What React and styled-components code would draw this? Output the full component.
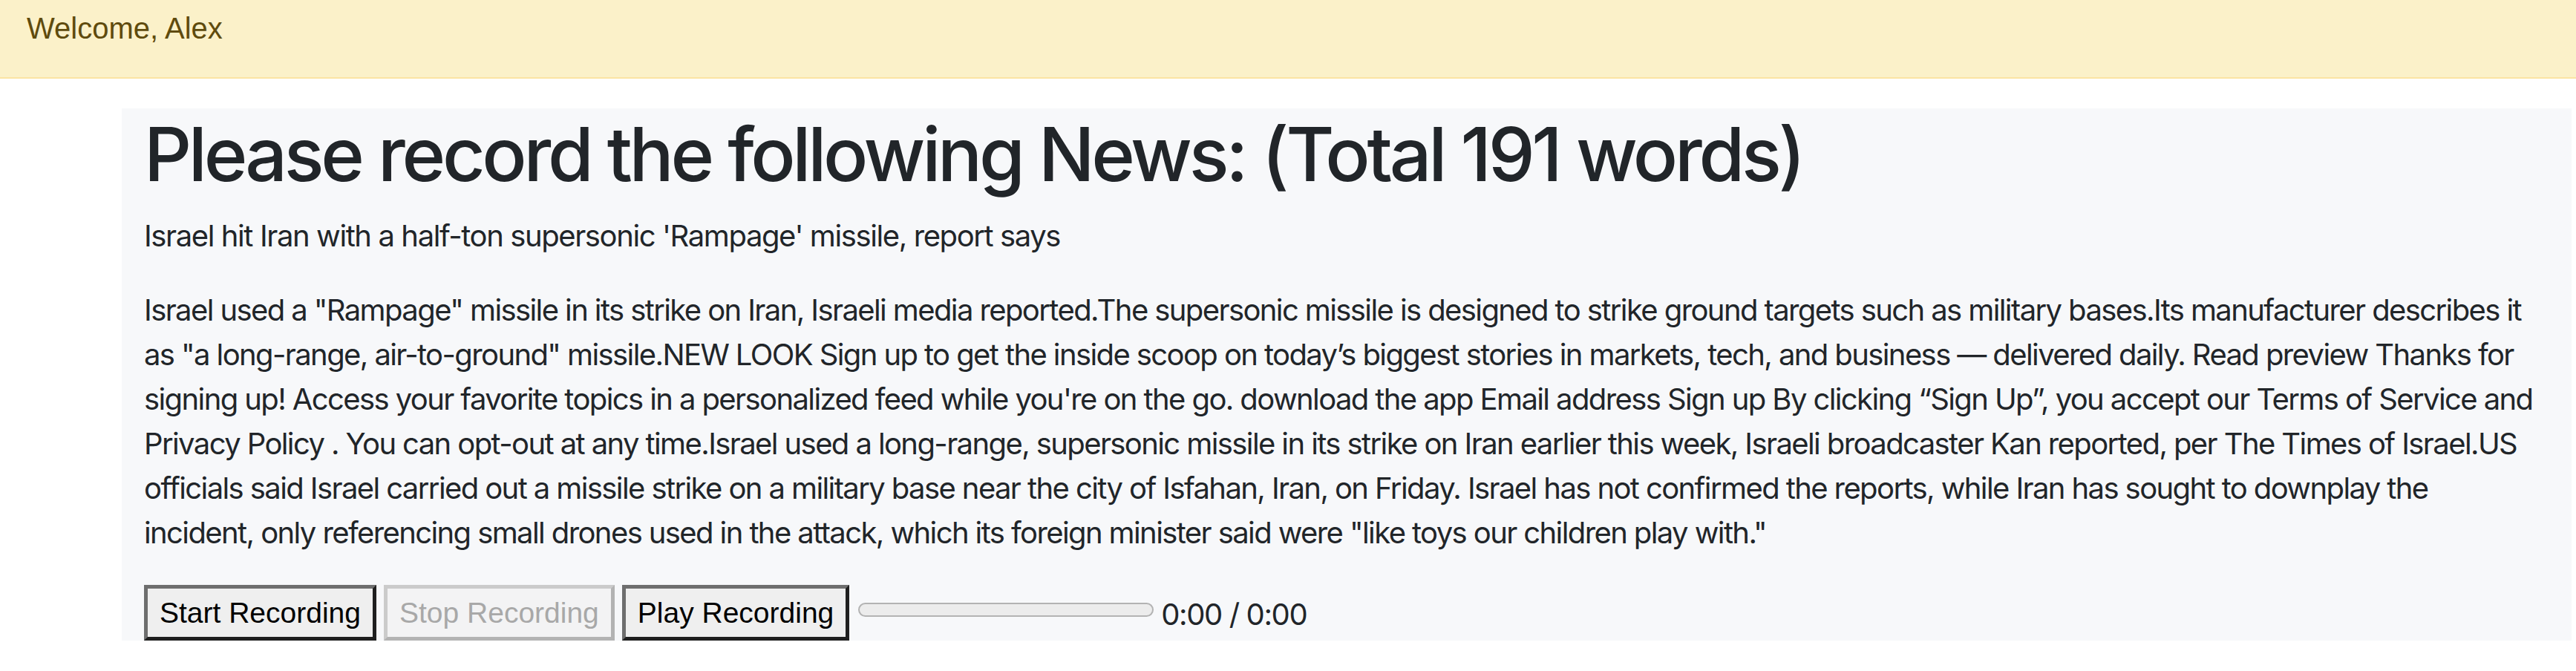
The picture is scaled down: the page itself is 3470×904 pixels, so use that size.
import React from 'react';
import styled, { createGlobalStyle } from 'styled-components';

const GlobalStyle = createGlobalStyle`
  body {
    margin: 0;
    background: #ffffff;
    font-family: Inter, "Noto Sans", sans-serif;
    color: #212529;
  }
`;

const news = {
  words: 191,
  title: "Israel hit Iran with a half-ton supersonic 'Rampage' missile, report says",
  body:
    'Israel used a "Rampage" missile in its strike on Iran, Israeli media reported.The supersonic missile is designed to strike ground targets such as military bases.Its manufacturer describes it as "a long-range, air-to-ground" missile.NEW LOOK Sign up to get the inside scoop on today\u2019s biggest stories in markets, tech, and business \u2014 delivered daily. Read preview Thanks for signing up! Access your favorite topics in a personalized feed while you\'re on the go. download the app Email address Sign up By clicking \u201cSign Up\u201d, you accept our Terms of Service and Privacy Policy . You can opt-out at any time.Israel used a long-range, supersonic missile in its strike on Iran earlier this week, Israeli broadcaster Kan reported, per The Times of Israel.US officials said Israel carried out a missile strike on a military base near the city of Isfahan, Iran, on Friday. Israel has not confirmed the reports, while Iran has sought to downplay the incident, only referencing small drones used in the attack, which its foreign minister said were "like toys our children play with."',
};

const App = () => (
  <>
    <GlobalStyle />
    <Header>Welcome, Alex</Header>
    <Panel>
      <Title>Please record the following News: (Total {news.words} words)</Title>
      <Paragraph>{news.title}</Paragraph>
      <Paragraph $tight>{news.body}</Paragraph>
      <Controls>
        <RecordButton>Start Recording</RecordButton>
        <RecordButton disabled>Stop Recording</RecordButton>
        <RecordButton>Play Recording</RecordButton>
        <Progress />
        <Time>0:00 / 0:00</Time>
      </Controls>
    </Panel>
  </>
);

export default App;

const Header = styled.header`
  height: 106px;
  box-sizing: border-box;
  padding: 8px 36px;
  background: #fbf1c9;
  border-bottom: 2px solid #fbe4a3;
  color: #5f4b0d;
  font-family: "Liberation Sans", Arial, sans-serif;
  font-size: 40px;
  line-height: 60px;
`;

const Panel = styled.main`
  box-sizing: border-box;
  width: 3300px;
  margin: 40px 0 0 164px;
  padding: 0 37px 0 30px;
  background: #f7f8fa;
`;

const Title = styled.h1`
  margin: 0 0 20px;
  padding-top: 2px;
  font-size: 100px;
  font-weight: 500;
  line-height: 120px;
  letter-spacing: -4.3px;
`;

const Paragraph = styled.p`
  margin: 0 0 40px;
  font-size: 40px;
  line-height: 60px;
  letter-spacing: ${(p) => (p.$tight ? '-1.6px' : '-1.4px')};
`;

const Controls = styled.div`
  display: flex;
  align-items: center;
  gap: 10px;
`;

const RecordButton = styled.button`
  box-sizing: border-box;
  height: 75px;
  padding: 0 16px;
  border: 5px solid;
  border-color: #6e6e6e #1f1f1f #1f1f1f #6e6e6e;
  background: #efefef;
  color: #000000;
  font-family: "Liberation Sans", Arial, sans-serif;
  font-size: 39px;
  line-height: 65px;

  &:disabled {
    border-color: #cbcbcb #b3b3b3 #b3b3b3 #cbcbcb;
    background: #f3f3f4;
    color: #a8a8a8;
  }
`;

const Progress = styled.div`
  box-sizing: border-box;
  width: 398px;
  height: 19px;
  margin: -8px 0 0 2px;
  border: 2px solid #b3b3b3;
  border-radius: 10px;
  background: #ececec;
`;

const Time = styled.span`
  font-size: 40px;
  line-height: 60px;
  margin-top: 4px;
  letter-spacing: -1.4px;
`;
